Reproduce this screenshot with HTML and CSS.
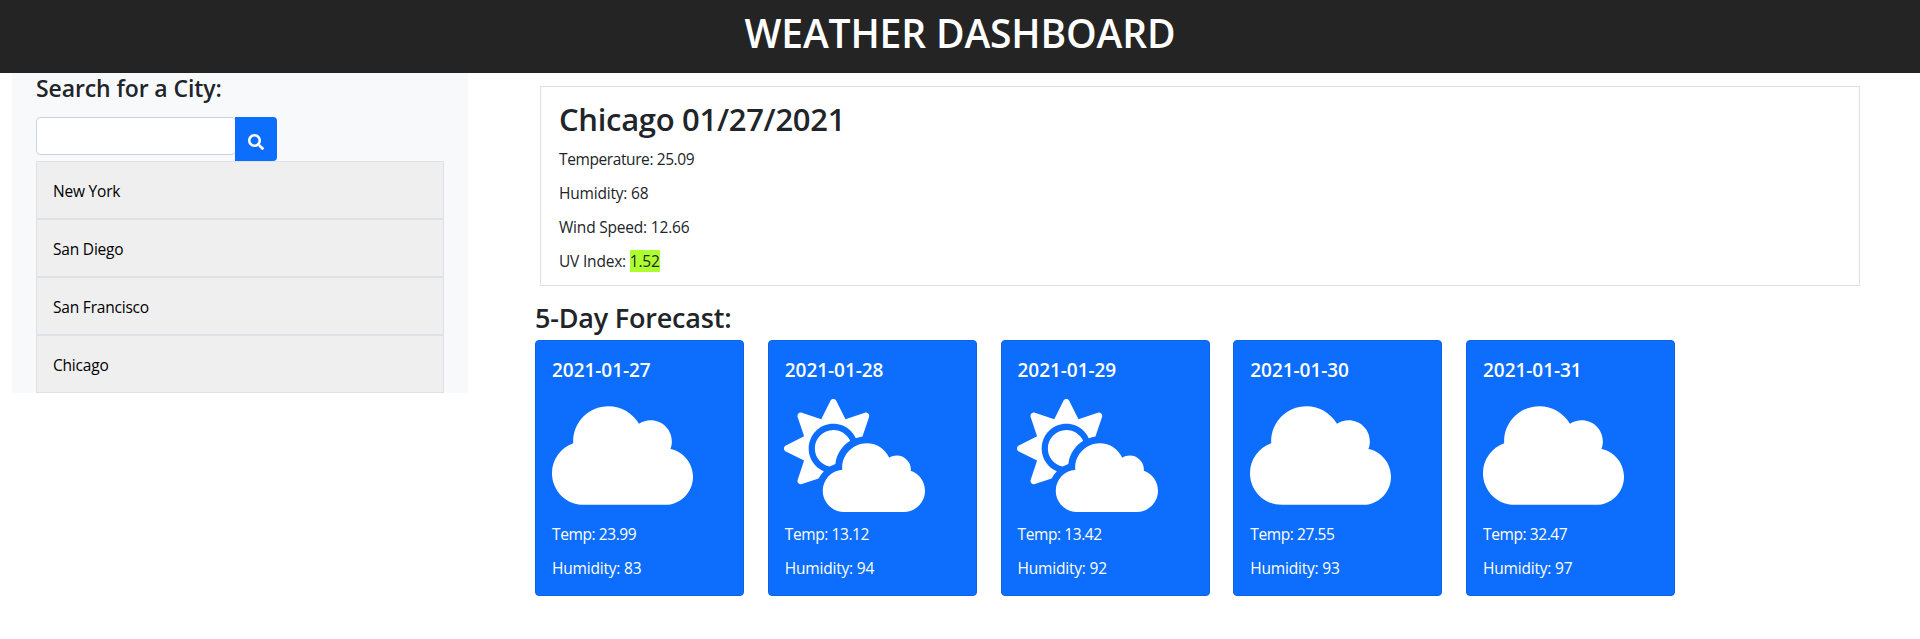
FILE: index.html
```html
<!DOCTYPE html>
<html lang="en">
<head>
<meta charset="utf-8">
<title>Weather Dashboard</title>
<link rel="stylesheet" href="styles.css">
</head>
<body>
<svg class="sprite" width="0" height="0" aria-hidden="true">
  <symbol id="cloud" viewBox="0 0 640 512"><path d="M537.6 226.6c4.1-10.7 6.4-22.4 6.4-34.6 0-53-43-96-96-96-19.7 0-38.1 6-53.3 16.2C367 64.2 315.3 32 256 32c-88.4 0-160 71.6-160 160 0 2.7.1 5.4.2 8.1C40.2 219.8 0 273.2 0 336c0 79.5 64.5 144 144 144h368c70.7 0 128-57.3 128-128 0-61.9-44-113.6-102.4-125.4z"/></symbol>
  <symbol id="cloud-sun" viewBox="0 0 640 512"><path d="M575.2 325.7c.2-1.9.8-3.7.8-5.6 0-35.3-28.7-64-64-64-12.6 0-24.2 3.8-34.1 10-17.6-38.8-56.5-66-101.9-66-61.8 0-112 50.1-112 112 0 3 .7 5.8.9 8.7-49.6 3.7-88.9 44.7-88.9 95.3 0 53 43 96 96 96h272c53 0 96-43 96-96 0-42.1-27.2-77.4-64.8-90.4zm-430.4-22.6c-43.7-43.7-43.7-114.7 0-158.3 43.7-43.7 114.7-43.7 158.4 0 9.7 9.7 16.9 20.9 22.3 32.7 9.8-3.7 20.1-6 30.7-7.5L386 81.1c4-11.9-7.3-23.1-19.2-19.2L279 91.2 237.5 8.4C232-2.8 216-2.8 210.4 8.4L169 91.2 81.1 61.9C69.3 58 58 69.3 61.9 81.1l29.3 87.8-82.8 41.5c-11.2 5.6-11.2 21.5 0 27.1l82.8 41.4-29.3 87.8c-4 11.9 7.3 23.1 19.2 19.2l76.1-25.3c6.1-12.4 14-23.7 23.6-33.5-13.1-5.4-25.4-13.4-36-24zm-4.8-79.2c0 40.8 29.3 74.8 67.9 82.3 8-4.7 16.3-8.8 25.2-11.7 5.4-44.3 31-82.5 67.4-105C287.3 160.4 258 140 224 140c-46.3 0-84 37.6-84 83.9z"/></symbol>
</svg>
<header class="banner"><h1 class="banner-title">WEATHER DASHBOARD</h1></header>
<main class="layout">
  <aside class="sidebar">
    <h4 class="search-title">Search for a City:</h4>
    <div class="search">
      <input class="search-input" type="text" aria-label="City">
      <button class="search-button" type="button" aria-label="Search"><svg width="16" height="16" viewBox="0 0 512 512" fill="currentColor"><path d="M505 442.7L405.3 343c-4.5-4.5-10.6-7-17-7H372c27.6-35.3 44-79.7 44-128C416 93.1 322.9 0 208 0S0 93.1 0 208s93.1 208 208 208c48.3 0 92.7-16.4 128-44v16.3c0 6.4 2.5 12.5 7 17l99.7 99.7c9.4 9.4 24.6 9.4 33.9 0l28.3-28.3c9.4-9.4 9.4-24.6.1-34zM208 336c-70.7 0-128-57.2-128-128 0-70.7 57.2-128 128-128 70.7 0 128 57.2 128 128 0 70.7-57.2 128-128 128z"/></svg></button>
    </div>
    <div class="cities">
      <button class="city">New York</button>
      <button class="city">San Diego</button>
      <button class="city">San Francisco</button>
      <button class="city">Chicago</button>
    </div>
  </aside>
  <div class="content">
    <section class="current">
      <h2 class="current-title">Chicago 01/27/2021</h2>
      <p class="line line-tight">Temperature: 25.09</p>
      <p class="line">Humidity: 68</p>
      <p class="line">Wind Speed: 12.66</p>
      <p class="line">UV Index: <span class="uv">1.52</span></p>
    </section>
    <h3 class="forecast-title">5-Day Forecast:</h3>
    <section class="forecast">
      <article class="card"><h5 class="card-title">2021-01-27</h5><svg class="icon"><use href="#cloud"/></svg><p class="line line-tight">Temp: 23.99</p><p class="line">Humidity: 83</p></article>
      <article class="card"><h5 class="card-title">2021-01-28</h5><svg class="icon"><use href="#cloud-sun"/></svg><p class="line line-tight">Temp: 13.12</p><p class="line">Humidity: 94</p></article>
      <article class="card"><h5 class="card-title">2021-01-29</h5><svg class="icon"><use href="#cloud-sun"/></svg><p class="line line-tight">Temp: 13.42</p><p class="line">Humidity: 92</p></article>
      <article class="card"><h5 class="card-title">2021-01-30</h5><svg class="icon"><use href="#cloud"/></svg><p class="line line-tight">Temp: 27.55</p><p class="line">Humidity: 93</p></article>
      <article class="card"><h5 class="card-title">2021-01-31</h5><svg class="icon"><use href="#cloud"/></svg><p class="line line-tight">Temp: 32.47</p><p class="line">Humidity: 97</p></article>
    </section>
  </div>
</main>
</body>
</html>
```
FILE: styles.css
```css
* { box-sizing: border-box; }
body {
  margin: 0;
  background: #fff;
  color: #212529;
  font: 400 15.5px/24px "Open Sans", "Noto Sans", sans-serif;
  letter-spacing: -0.2px;
}
h1, h2, h3, h4, h5, p { margin: 0; font-weight: 600; }
p { font-weight: 400; }
.sprite { display: block; }
.banner { height: 73px; padding-top: 9px; background: #242424; text-align: center; }
.banner-title { color: #fff; font-size: 39px; line-height: 48px; letter-spacing: -0.15px; }
.layout { display: flex; align-items: flex-start; padding-left: 12px; }
.sidebar { width: 456px; padding: 0 24px; background: #f8f9fa; }
.search-title { padding-top: 1px; margin-bottom: 14px; font-size: 23px; line-height: 29px; letter-spacing: -0.1px; }
.search { display: flex; align-items: flex-start; height: 44px; }
.search-input { width: 200px; height: 38px; margin-right: -1px; border: 1px solid #ced4da; border-radius: 4px; background: #fff; }
.search-button { position: relative; display: flex; align-items: center; justify-content: center; width: 42px; height: 44px; padding: 6px 0 0; border: 0; border-radius: 0 4px 4px 0; background: #0d6efd; color: #fff; }
.search-button svg { display: block; }
.cities { display: flex; flex-direction: column; }
.city { height: 58px; padding: 1px 16px 0; border: 1px solid #dee2e6; background: #efefef; color: #000; font: inherit; letter-spacing: inherit; text-align: left; }
.content { width: 1325px; margin-left: 67px; padding-top: 13px; }
.current { height: 200px; margin-left: 5px; padding: 13px 18px 0; border: 1px solid #dee2e6; }
.current-title { margin-bottom: 9px; font-size: 31px; line-height: 38px; letter-spacing: -0.3px; }
.line { margin-bottom: 10px; }
.line-tight { letter-spacing: -0.4px; }
.uv { background: #adff2f; }
.forecast-title { margin: 15px 0 5px; font-size: 27px; line-height: 34px; letter-spacing: -0.2px; }
.forecast { display: grid; grid-template-columns: repeat(5, 209px); column-gap: 23.75px; }
.card { height: 256px; padding: 17px 16px 0; border: 1px solid #0c62e0; border-radius: 4px; background: #0d6efd; color: #fff; }
.card-title { margin-bottom: 16px; font-size: 19px; line-height: 25px; letter-spacing: -0.05px; }
.icon { display: block; width: 141px; height: 113px; margin: 0 0 10px -0.5px; fill: currentColor; }
```
